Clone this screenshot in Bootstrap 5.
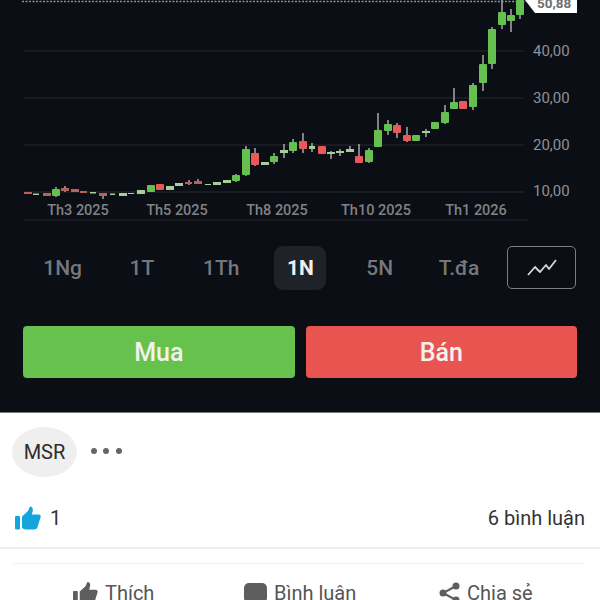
<!doctype html>
<html lang="vi"><head><meta charset="utf-8"><title>MSR</title>
<link href="https://cdn.jsdelivr.net/npm/bootstrap@5.3.0/dist/css/bootstrap.min.css" rel="stylesheet">
<style>
html,body{height:600px;overflow:hidden;background:#fff;font-family:Roboto,"Liberation Sans",sans-serif;}
.dark-panel{height:413px;background:#0b0e14;border-bottom:1px solid #77797c;}
.chart-svg{display:block;width:600px;height:232px;}
.grid-lines line{stroke:#1e2126;stroke-width:1.4;}
.axis-x{font:500 14.5px Roboto,sans-serif;fill:#808285;text-anchor:middle;}
.axis-y{font:400 15px Roboto,sans-serif;fill:#8f9194;}
.wicks{stroke:#9d9f9f;stroke-width:1.6;fill:none;}
.up rect{fill:#65c04f;}
.up-pale rect{fill:#a5cf97;}
.down rect{fill:#e8595a;}
.down-pale rect{fill:#b9615f;}
.candles{filter:blur(.5px);}
.period-row{padding:14px 24px 0 23px;height:94px;}
.period-item{width:79.300px;height:44px;line-height:44px;text-align:center;color:#75787b;font-size:21px;font-weight:500;border-radius:9px;}
.period-on{width:52px;margin:0 13.600px;background:#1f2329;color:#eef0f2;font-weight:700;}
.chart-toggle{width:69px;height:43px;margin-left:auto;border:1.5px solid #7b7f83;border-radius:5px;}
.trade-row{padding:0 23px;gap:11px;}
.trade-btn{flex:1;height:52px;line-height:54px;text-align:center;border-radius:4px;color:#f4f2ec;font-size:25px;font-weight:500;}
.trade-buy{background:#66c24d;}
.trade-sell{background:#e85450;}
.tag-row{padding:14px 12px 0;height:74px;}
.tag-pill{width:65px;height:50px;border-radius:50%;background:#efefef;color:#2c2c2c;font-size:20px;line-height:51px;text-align:center;}
.more-dot{width:6px;height:6px;border-radius:50%;background:#666;}
.more-dots{gap:6.500px;margin-left:13.500px;margin-top:21px;}
.stats-row{padding:2px 15px 0;height:60px;color:#333;font-size:20px;}
.like-count{margin-left:1px;}
.rule-full{height:2px;background:#eeeeee;}
.rule-inner{height:1px;background:#f1f1f1;margin:14px 16px 0 13px;}
.action-item{position:absolute;top:580px;gap:7px;font-size:20px;line-height:24px;}
.act-like{left:73px;}.act-comment{left:244px;}.act-share{left:439px;}
.action-label{color:#555;padding-top:1px;}
</style></head>
<body>
<div class="dark-panel">
<svg class="chart-svg" viewBox="0 0 600 232" xmlns="http://www.w3.org/2000/svg">
<line x1="22" y1="1.5" x2="530" y2="1.5" stroke="#8d8f90" stroke-width="1.5" stroke-dasharray="2 1.5"/>
<g class="grid-lines"><line x1="24" y1="51" x2="524" y2="51"/><line x1="24" y1="98" x2="524" y2="98"/><line x1="24" y1="145" x2="524" y2="145"/><line x1="24" y1="192" x2="524" y2="192"/><line x1="24" y1="220" x2="528" y2="220"/></g>
<g class="axis-y"><text x="533" y="56">40,00</text><text x="533" y="103">30,00</text><text x="533" y="150">20,00</text><text x="533" y="196">10,00</text></g>
<g class="axis-x"><text x="78" y="215">Th3 2025</text><text x="177" y="215">Th5 2025</text><text x="277" y="215">Th8 2025</text><text x="376" y="215">Th10 2025</text><text x="476" y="215">Th1 2026</text></g>
<g class="candles">
<path class="wicks" d="M56 187V197M65 186V192M103 193V199M189 180V185M198 179V184M236 174V182M246 146V176M255 148V166M274 153V164M284 144V158M293 139V153M303 133V153M312 143V152M331 151V159M340 149V156M350 146V152M359 144V163M369 148V163M378 113V147M388 120V135M397 123V138M407 127V142M426 129V137M445 105V124M454 88V109M473 83V110M483 55V91M492 27V69M502 0V29M511 9V32M520 0V19"/>
<g class="down-pale"><rect x="24" y="192" width="8" height="2"/><rect x="43" y="193" width="8" height="3"/><rect x="71" y="189" width="8" height="3"/><rect x="80" y="191" width="7" height="2"/><rect x="99" y="193" width="8" height="3"/><rect x="61" y="188" width="8" height="3"/><rect x="185" y="182" width="7" height="2"/><rect x="194" y="181" width="8" height="3"/></g>
<g class="up-pale"><rect x="33" y="193.500" width="6" height="1.500"/><rect x="90" y="192" width="6" height="1.500"/><rect x="110" y="193.500" width="5" height="1.500"/><rect x="119" y="193" width="8" height="3"/><rect x="128" y="193" width="6" height="1"/><rect x="137" y="190" width="8" height="4"/><rect x="166" y="186" width="8" height="4"/><rect x="175" y="183" width="8" height="3"/><rect x="205" y="184" width="6" height="1"/><rect x="213" y="182" width="8" height="3"/><rect x="223" y="180" width="8" height="3"/><rect x="261" y="162" width="8" height="3"/><rect x="280" y="150" width="8" height="3"/><rect x="309" y="146" width="6" height="3"/><rect x="327" y="152" width="8" height="2"/><rect x="336" y="151" width="8" height="2"/><rect x="346" y="149" width="8" height="3"/><rect x="422" y="131" width="8" height="2"/></g>
<g class="up"><rect x="52" y="189" width="8" height="7" rx="1"/><rect x="147" y="185" width="8" height="7" rx="1"/><rect x="232" y="175" width="8" height="6" rx="1"/><rect x="242" y="149" width="8" height="26" rx="1"/><rect x="270" y="156" width="8" height="6" rx="1"/><rect x="289" y="142" width="8" height="9" rx="1"/><rect x="365" y="150" width="8" height="12" rx="1"/><rect x="374" y="130" width="8" height="17" rx="1"/><rect x="384" y="124" width="8" height="7" rx="1"/><rect x="412" y="135" width="8" height="6" rx="1"/><rect x="431" y="122" width="8" height="7" rx="1"/><rect x="441" y="112" width="8" height="11" rx="1"/><rect x="450" y="102" width="8" height="7" rx="1"/><rect x="469" y="85" width="8" height="22" rx="1"/><rect x="479" y="64" width="8" height="19" rx="1"/><rect x="488" y="29" width="8" height="35" rx="1"/><rect x="498" y="12" width="8" height="13" rx="1"/><rect x="507" y="15" width="8" height="6" rx="1"/><rect x="516" y="0" width="8" height="15" rx="1"/></g>
<g class="down"><rect x="156" y="184" width="8" height="6" rx="1"/><rect x="251" y="153" width="8" height="12" rx="1"/><rect x="299" y="141" width="8" height="8" rx="1"/><rect x="318" y="146" width="8" height="8" rx="1"/><rect x="355" y="156" width="8" height="7" rx="1"/><rect x="393" y="125" width="8" height="8" rx="1"/><rect x="403" y="135" width="8" height="6" rx="1"/><rect x="459" y="101" width="8" height="8" rx="1"/></g>
</g>
<path d="M525 0H577V13H535Z" fill="#fff"/>
<text x="537" y="8" font-family="Roboto,sans-serif" font-size="13.500" font-weight="700" fill="#6d6f72">50,88</text>
</svg>
<div class="period-row d-flex align-items-start">
<div class="period-item">1Ng</div><div class="period-item">1T</div><div class="period-item">1Th</div>
<div class="period-item period-on">1N</div><div class="period-item">5N</div><div class="period-item">T.đa</div>
<div class="chart-toggle d-flex align-items-center justify-content-center">
<svg width="30" height="20" viewBox="0 0 30 20" xmlns="http://www.w3.org/2000/svg"><path d="M1 17L8 9L13 14L19 7L22 11L29 2" fill="none" stroke="#d6d8da" stroke-width="1.800" stroke-linejoin="round"/></svg>
</div></div>
<div class="trade-row d-flex"><div class="trade-btn trade-buy">Mua</div><div class="trade-btn trade-sell">Bán</div></div>
</div>
<div class="tag-row d-flex align-items-start">
<div class="tag-pill">MSR</div>
<div class="more-dots d-flex"><span class="more-dot"></span><span class="more-dot"></span><span class="more-dot"></span></div>
</div>
<div class="stats-row d-flex align-items-center justify-content-between">
<div class="d-flex align-items-center gap-2">
<svg width="26" height="24" viewBox="0 0 26 24" xmlns="http://www.w3.org/2000/svg"><rect x="0" y="10" width="5" height="13.500" rx="1" fill="#14a5dc"/><path d="M7 10.500L13 5L15 0.500C17.500 0.500 18.500 3 17.500 6L16.800 8.500H23.500C25.500 8.500 26 10 25.500 11.500L22.500 21C22 22.800 21 23.500 19 23.500H11C9 23.500 7 22.500 7 21Z" fill="#14a5dc"/></svg>
<span class="like-count">1</span></div>
<div>6 bình luận</div>
</div>
<div class="rule-full"></div>
<div class="rule-inner"></div>
<div class="action-item act-like d-flex align-items-center"><svg width="25" height="24" viewBox="0 0 26 24" xmlns="http://www.w3.org/2000/svg"><rect x="0" y="10" width="5" height="14" rx="1" fill="#5e5e5e"/><path d="M7 10.500L13 5L15 0.500C17.500 0.500 18.500 3 17.500 6L16.800 8.500H23.500C25.500 8.500 26 10 25.500 11.500L22.500 21C22 22.800 21 24 19 24H11C9 24 7 22.500 7 21Z" fill="#5e5e5e"/></svg><span class="action-label">Thích</span></div>
<div class="action-item act-comment d-flex align-items-center"><svg width="23" height="24" viewBox="0 0 23 24" xmlns="http://www.w3.org/2000/svg"><rect x="0" y="2" width="23" height="20" rx="5" fill="#5e5e5e"/></svg><span class="action-label">Bình luận</span></div>
<div class="action-item act-share d-flex align-items-center"><svg width="21" height="24" viewBox="0 0 21 24" xmlns="http://www.w3.org/2000/svg"><path d="M17 5L4 12L17 19" fill="none" stroke="#5e5e5e" stroke-width="2"/><circle cx="17" cy="5" r="3.500" fill="#5e5e5e"/><circle cx="4" cy="12" r="3.500" fill="#5e5e5e"/><circle cx="17" cy="19" r="3.500" fill="#5e5e5e"/></svg><span class="action-label">Chia sẻ</span></div>
</body></html>
